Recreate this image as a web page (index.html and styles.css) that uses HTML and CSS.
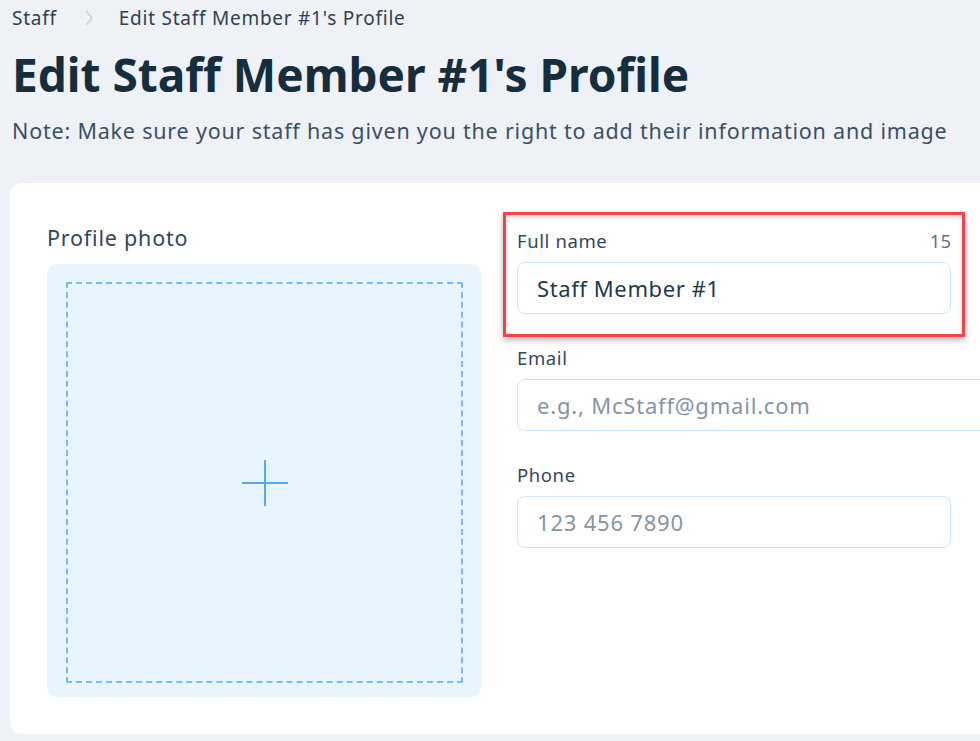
FILE: index.html
```html
<!DOCTYPE html>
<html>
<head>
<meta charset="utf-8">
<link rel="stylesheet" href="styles.css">
</head>
<body>
<div class="page">
  <nav class="crumbs">
    <span class="crumb">Staff</span>
    <svg class="chev" width="10" height="18" viewBox="0 0 10 18"><path d="M2 2 L8 9 L2 16" fill="none" stroke="#c3ccd5" stroke-width="1.3"/></svg>
    <span class="crumb">Edit Staff Member #1's Profile</span>
  </nav>
  <h1 class="title">Edit Staff Member #1's Profile</h1>
  <p class="note">Note: Make sure your staff has given you the right to add their information and image</p>
  <section class="card">
    <div class="photo-col">
      <div class="label photo-label">Profile photo</div>
      <div class="upload">
        <div class="dash">
          <svg class="plus" width="48" height="48" viewBox="0 0 48 48"><path d="M24 1 V47 M1 24 H47" stroke="#5aa8e8" stroke-width="2" fill="none"/></svg>
        </div>
      </div>
    </div>
    <div class="fields">
      <div class="field highlight">
        <div class="field-head"><span class="label">Full name</span><span class="count">15</span></div>
        <div class="input">Staff Member #1</div>
        <div class="redbox"></div>
      </div>
      <div class="field">
        <div class="field-head"><span class="label">Email</span></div>
        <div class="input wide placeholder">e.g., McStaff@gmail.com</div>
      </div>
      <div class="field">
        <div class="field-head"><span class="label">Phone</span></div>
        <div class="input placeholder">123 456 7890</div>
      </div>
    </div>
  </section>
</div>
</body>
</html>
```
FILE: styles.css
```css
html, body {
  margin: 0;
  padding: 0;
  background: #eef2f6;
  overflow: hidden;
  height: 741px;
}
.page {
  font-family: "Noto Sans", "Open Sans", sans-serif;
  color: #162d3d;
  display: flex;
  flex-direction: column;
}
.crumbs {
  display: flex;
  align-items: center;
  height: 36px;
  padding-left: 12px;
  font-size: 19px;
  letter-spacing: 0.75px;
  color: #2f4150;
}
.chev { margin: 0 25px 0 27px; }
.title {
  margin: 10px 0 0 12px;
  font-size: 46px;
  font-weight: 700;
  line-height: 56px;
  color: #162d3d;
  letter-spacing: 0;
}
.note {
  margin: 14px 0 0 12px;
  font-size: 21.5px;
  letter-spacing: 0.8px;
  line-height: 30px;
  color: #3b5063;
}
.card {
  margin: 37px 0 0 10px;
  width: 1000px;
  height: 551px;
  background: #fff;
  border-radius: 12px;
  display: flex;
  box-sizing: border-box;
  padding: 38px 0 0 37px;
  gap: 36px;
}
.photo-col {
  display: flex;
  flex-direction: column;
  width: 434px;
}
.label {
  font-size: 18.5px;
  letter-spacing: 0.6px;
  color: #32475a;
}
.photo-label {
  font-size: 21.5px;
  letter-spacing: 0.8px;
  line-height: 34px;
  margin-bottom: 9px;
}
.upload {
  width: 434px;
  height: 433px;
  background: #e8f5fe;
  border-radius: 10px;
  box-sizing: border-box;
  padding: 18px 18px 18px 19px;
}
.dash {
  height: 100%;
  border: 2px dashed #74bff0;
  border-radius: 2px;
  display: flex;
  align-items: center;
  justify-content: center;
}
.fields {
  display: flex;
  flex-direction: column;
  width: 434px;
  padding-top: 4px;
}
.field {
  position: relative;
  display: flex;
  flex-direction: column;
  margin-bottom: 28px;
}
.field-head {
  display: flex;
  justify-content: space-between;
  align-items: center;
  height: 30px;
  margin-bottom: 7px;
}
.count {
  font-size: 18.5px;
  color: #5f7385;
}
.input {
  height: 52px;
  box-sizing: border-box;
  border: 1.5px solid #cce6fb;
  border-radius: 8px;
  display: flex;
  align-items: center;
  padding-left: 19px;
  font-size: 22px;
  letter-spacing: 0.6px;
  color: #22394b;
  background: #fff;
}
.input.wide { width: 480px; }
.placeholder { color: #8495a6; letter-spacing: 0.8px; }
.redbox {
  position: absolute;
  left: -14px;
  top: -13px;
  width: 462px;
  height: 125px;
  box-sizing: border-box;
  border: 3px solid #f0434c;
  box-shadow: 0 3px 6px rgba(0,0,0,0.3), inset 0 2px 4px rgba(0,0,0,0.2);
}
```
